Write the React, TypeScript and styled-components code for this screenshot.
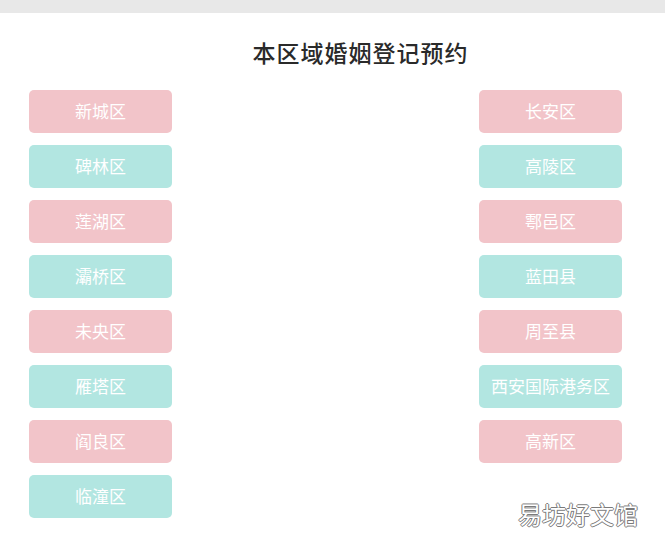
import React from 'react';
import styled, { createGlobalStyle } from 'styled-components';

const GlobalStyle = createGlobalStyle`
  html, body {
    margin: 0;
    padding: 0;
    background: #ffffff;
  }
  body {
    font-family: "Liberation Serif", "Noto Sans CJK SC", serif;
  }
`;

const Page = styled.div`
  position: relative;
  width: 665px;
  height: 547px;
  overflow: hidden;
  background: #ffffff;
`;

const TopBar = styled.div`
  height: 13px;
  background: #e8e8e8;
`;

const Title = styled.h1`
  margin: 0;
  height: 77px;
  padding-left: 56px;
  display: flex;
  align-items: center;
  justify-content: center;
  font-size: 23px;
  font-weight: 500;
  letter-spacing: 1px;
  color: #2a2a2a;
  font-family: "Liberation Serif", "Noto Sans CJK SC", serif;
`;

const Columns = styled.div`
  display: flex;
  justify-content: space-between;
  padding: 0 43px 0 29px;
`;

const Column = styled.div`
  display: flex;
  flex-direction: column;
  gap: 12px;
`;

const DistrictButton = styled.button<{ $tone: 'pink' | 'teal' }>`
  width: 143px;
  height: 43px;
  border: none;
  border-radius: 5px;
  padding: 0 0 2px;
  background: ${(p) => (p.$tone === 'pink' ? '#f2c4c9' : '#b2e6e1')};
  color: #ffffff;
  font-size: 17px;
  font-family: "Liberation Serif", "Noto Sans CJK SC", serif;
  display: flex;
  align-items: center;
  justify-content: center;
  cursor: pointer;
`;

const Watermark = styled.div`
  position: absolute;
  right: 27px;
  bottom: 16px;
  font-size: 24px;
  font-family: "Noto Sans CJK SC", sans-serif;
  color: #ffffff;
  text-shadow:
    1px 0 #7a7a7a,
    -1px 0 #7a7a7a,
    0 1px #7a7a7a,
    0 -1px #7a7a7a;
`;

const left = ['新城区', '碑林区', '莲湖区', '灞桥区', '未央区', '雁塔区', '阎良区', '临潼区'];
const right = ['长安区', '高陵区', '鄠邑区', '蓝田县', '周至县', '西安国际港务区', '高新区'];

export default function App() {
  return (
    <Page>
      <GlobalStyle />
      <TopBar />
      <Title>本区域婚姻登记预约</Title>
      <Columns>
        <Column>
          {left.map((name, i) => (
            <DistrictButton key={name} $tone={i % 2 === 0 ? 'pink' : 'teal'}>
              {name}
            </DistrictButton>
          ))}
        </Column>
        <Column>
          {right.map((name, i) => (
            <DistrictButton key={name} $tone={i % 2 === 0 ? 'pink' : 'teal'}>
              {name}
            </DistrictButton>
          ))}
        </Column>
      </Columns>
      <Watermark>易坊好文馆</Watermark>
    </Page>
  );
}
